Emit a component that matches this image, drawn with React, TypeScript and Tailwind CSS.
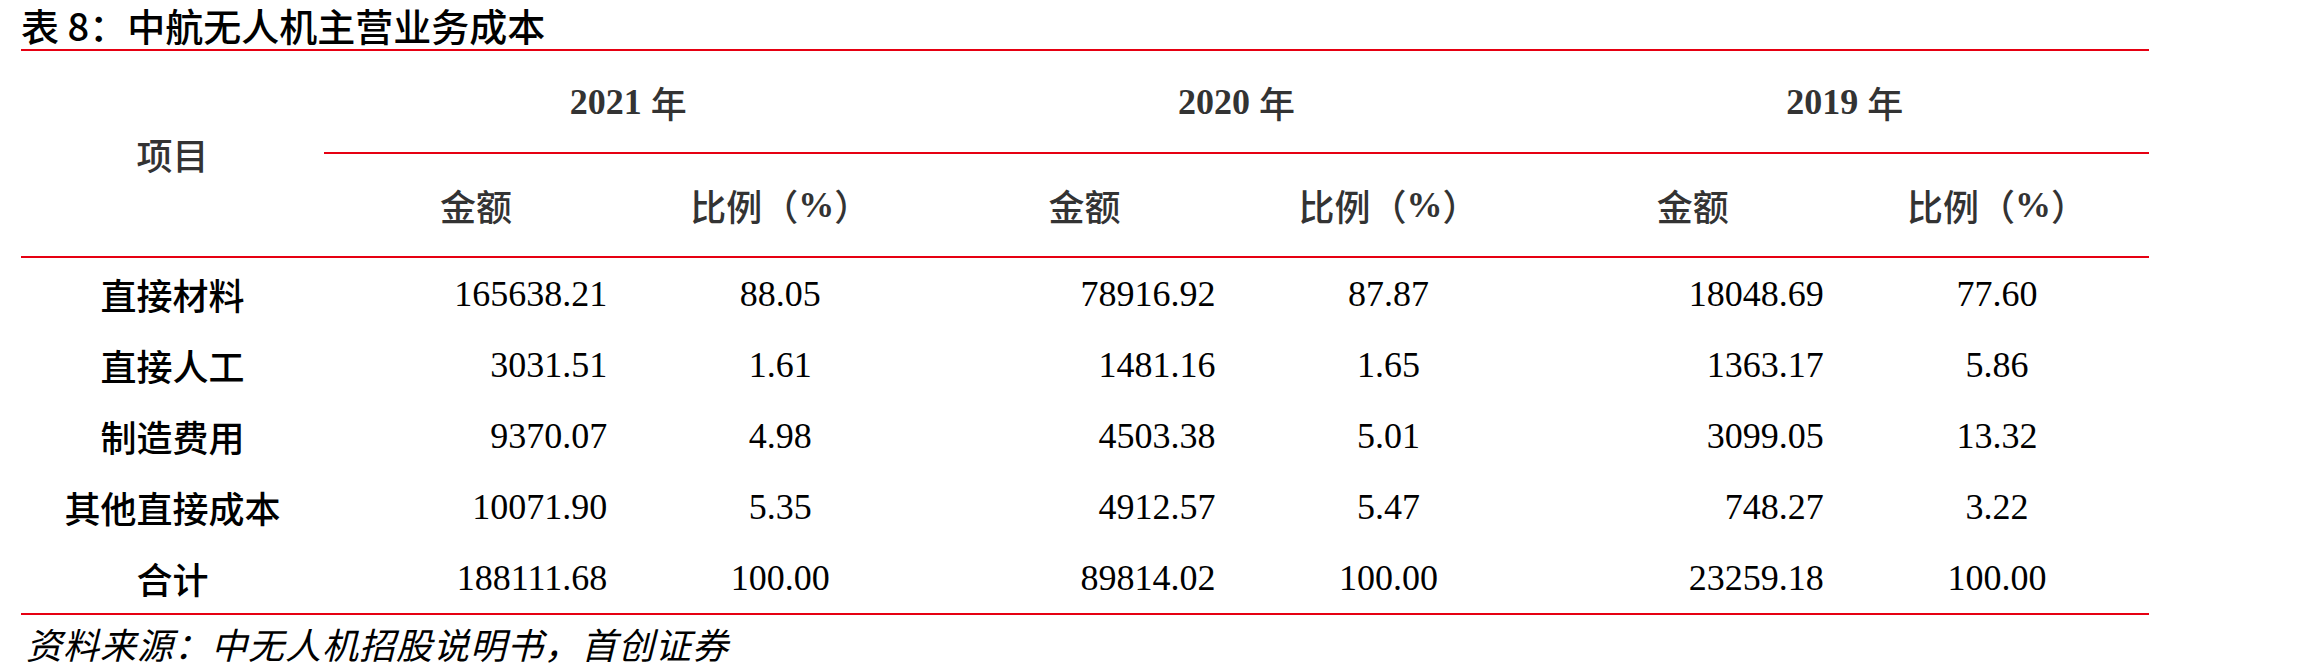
const cjk = "font-['Noto_Sans_CJK_SC',sans-serif]";
const serif = "font-['Liberation_Serif','Noto_Sans_CJK_SC',serif]";

const rows = [
  { name: "直接材料", v: ["165638.21", "88.05", "78916.92", "87.87", "18048.69", "77.60"] },
  { name: "直接人工", v: ["3031.51", "1.61", "1481.16", "1.65", "1363.17", "5.86"] },
  { name: "制造费用", v: ["9370.07", "4.98", "4503.38", "5.01", "3099.05", "13.32"] },
  { name: "其他直接成本", v: ["10071.90", "5.35", "4912.57", "5.47", "748.27", "3.22"] },
  { name: "合计", v: ["188111.68", "100.00", "89814.02", "100.00", "23259.18", "100.00"] },
];

const years = ["2021", "2020", "2019"];

const Line = () => <div className="h-[2px] w-full bg-[#e60012]" />;

const App = () => {
  return (
    <div className="w-[2303px] h-[671px] bg-white overflow-hidden">
      <div className="ml-[21px] w-[2128px]">
        {/* Title */}
        <div className={`h-[49px] flex items-center text-[38px] leading-[49px] font-medium text-black ${cjk}`}>
          表 8：中航无人机主营业务成本
        </div>
        <Line />

        {/* Header */}
        <div className="grid grid-cols-[303px_1fr]">
          <div className={`flex items-center justify-center text-[36px] font-medium text-[#333] ${cjk}`}>
            项目
          </div>
          <div className="flex flex-col">
            <div className="grid grid-cols-3 h-[101px]">
              {years.map((y) => (
                <div key={y} className="flex items-center justify-center text-[36px] text-[#333]">
                  <span className={`font-bold ${serif}`}>{y}</span>
                  <span className={`ml-[9px] font-medium ${cjk}`}>年</span>
                </div>
              ))}
            </div>
            <Line />
            <div className="grid grid-cols-6 h-[102px]">
              {years.map((y) => (
                <div key={y} className="contents">
                  <div className={`flex items-center justify-center text-[36px] font-medium text-[#333] ${cjk}`}>
                    金额
                  </div>
                  <div className={`flex items-center justify-center text-[36px] font-medium text-[#333] ${cjk}`}>
                    比例（<span className={`font-bold ${serif}`}>%</span>）
                  </div>
                </div>
              ))}
            </div>
          </div>
        </div>
        <Line />

        {/* Body */}
        <div className="flex flex-col">
          {rows.map((r) => (
            <div key={r.name} className="grid grid-cols-[303px_repeat(6,1fr)] h-[71px] items-center">
              <div className={`text-center text-[36px] font-medium text-black ${cjk}`}>{r.name}</div>
              {r.v.map((val, i) => (
                <div
                  key={i}
                  className={`text-[36px] text-black ${serif} ${i % 2 === 0 ? "text-right pr-[21px]" : "text-center"}`}
                >
                  {val}
                </div>
              ))}
            </div>
          ))}
        </div>
        <Line />

        {/* Source */}
        <div className={`h-[56px] flex items-center pl-[5px] text-[36px] leading-[50px] tracking-[1px] italic text-black ${cjk}`}>
          资料来源：中无人机招股说明书，首创证券
        </div>
      </div>
    </div>
  );
};

export default App;
